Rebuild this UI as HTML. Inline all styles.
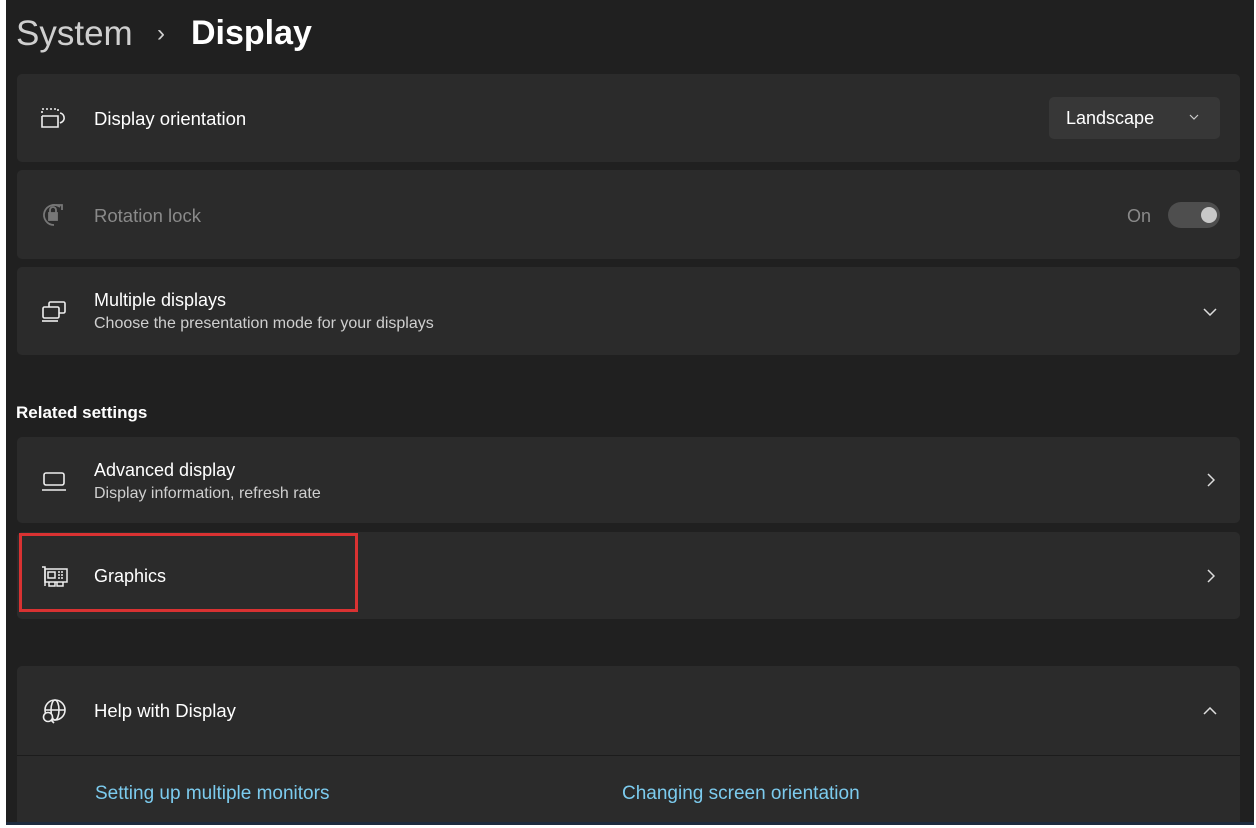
<!DOCTYPE html>
<html><head><meta charset="utf-8"><style>
*{margin:0;padding:0;box-sizing:border-box}
body{width:1256px;height:828px;background:#fff;position:relative;overflow:hidden;font-family:"Liberation Sans",sans-serif}
#app{position:absolute;left:6px;top:0;width:1248px;height:822px;background:#202020}
#bar{position:absolute;left:6px;top:822px;width:1248px;height:3px;background:#1d2b3e}
.t{position:absolute;color:#fff;white-space:nowrap}
.card{position:absolute;left:17px;width:1223px;background:#2b2b2b;border-radius:5px}
.ic{position:absolute;left:40px}
</style></head><body>
<div id="app"></div><div id="bar"></div>
<div class="t" style="left:16px;top:14px;font-size:35px;color:#cfcfcf">System</div>
<div class="t" style="left:157px;top:20px;font-size:24px;color:#cfcfcf">›</div>
<div class="t" style="left:191px;top:14px;font-size:34px;font-weight:bold">Display</div>

<div class="card" style="top:74px;height:88px"></div>
<svg class="ic" style="top:107px" width="28" height="22" viewBox="0 0 28 22" fill="none" stroke="#eee" stroke-width="1.6"><path d="M2 9v11h16V9H2" /><path d="M2 6V2h16v4" stroke-dasharray="2 2"/><path d="M20 6a5 5 0 0 1 2 9l-2 1"/></svg>
<div class="t" style="left:94px;top:108px;font-size:18.5px">Display orientation</div>
<div style="position:absolute;left:1049px;top:97px;width:171px;height:42px;background:#373737;border-radius:5px"></div>
<div class="t" style="left:1066px;top:108px;font-size:18px">Landscape</div>
<svg style="position:absolute;left:1189px;top:114px" width="10" height="6"><path d="M1 1l4 4 4-4" stroke="#ccc" fill="none" stroke-width="1.2"/></svg>

<div class="card" style="top:170px;height:89px"></div>
<svg class="ic" style="top:201px" width="28" height="28" viewBox="0 0 28 28" fill="none" stroke="#777" stroke-width="1.8"><path d="M20 6A10 10 0 1 0 14 24"/><path d="M16 4h6v5"/><rect x="9" y="12" width="8" height="7" fill="#777"/><path d="M10 12v-3a3 3 0 0 1 6 0v3"/></svg>
<div class="t" style="left:94px;top:205px;font-size:18.5px;color:#8a8a8a">Rotation lock</div>
<div class="t" style="left:1127px;top:206px;font-size:18px;color:#8a8a8a">On</div>
<div style="position:absolute;left:1168px;top:202px;width:52px;height:26px;background:#4e4e4e;border-radius:13px"></div>
<div style="position:absolute;left:1201px;top:207px;width:16px;height:16px;background:#c8c8c8;border-radius:50%"></div>

<div class="card" style="top:267px;height:88px"></div>
<svg class="ic" style="top:300px" width="28" height="24" viewBox="0 0 28 24" fill="none" stroke="#eee" stroke-width="1.6"><rect x="9" y="2" width="16" height="11" rx="1.5"/><rect x="3" y="7" width="16" height="11" rx="1.5" fill="#2b2b2b"/><path d="M2 21h16"/></svg>
<div class="t" style="left:94px;top:290px;font-size:18px">Multiple displays</div>
<div class="t" style="left:94px;top:315px;font-size:16px;color:#cfcfcf">Choose the presentation mode for your displays</div>
<svg style="position:absolute;left:1203px;top:308px" width="14" height="8"><path d="M1 1l6 6 6-6" stroke="#ddd" fill="none" stroke-width="1.5"/></svg>

<div class="t" style="left:16px;top:403px;font-size:17px;font-weight:bold">Related settings</div>

<div class="card" style="top:437px;height:86px"></div>
<svg class="ic" style="top:470px" width="28" height="22" viewBox="0 0 28 22" fill="none" stroke="#eee" stroke-width="1.6"><rect x="4" y="3" width="20" height="12" rx="2"/><path d="M2 20h24"/></svg>
<div class="t" style="left:94px;top:460px;font-size:18px">Advanced display</div>
<div class="t" style="left:94px;top:485px;font-size:16px;color:#cfcfcf">Display information, refresh rate</div>
<svg style="position:absolute;left:1207px;top:473px" width="8" height="14"><path d="M1 1l6 6-6 6" stroke="#ddd" fill="none" stroke-width="1.5"/></svg>

<div class="card" style="top:532px;height:87px"></div>
<svg class="ic" style="top:565px" width="28" height="24" viewBox="0 0 28 24" fill="none" stroke="#eee" stroke-width="1.5"><path d="M2 2h3v19"/><rect x="5" y="4" width="22" height="13"/><rect x="8" y="7" width="7" height="6"/><path d="M18 7h6M18 10h6M18 13h6" stroke-dasharray="2 1"/><path d="M9 17v4h6v-4M17 17v4h6v-4"/></svg>
<div class="t" style="left:94px;top:566px;font-size:18px">Graphics</div>
<svg style="position:absolute;left:1207px;top:569px" width="8" height="14"><path d="M1 1l6 6-6 6" stroke="#ddd" fill="none" stroke-width="1.5"/></svg>
<div style="position:absolute;left:19px;top:533px;width:339px;height:79px;border:3px solid #d93232"></div>

<div class="card" style="top:666px;height:156px;border-radius:5px 5px 0 0"></div>
<div style="position:absolute;left:17px;top:755px;width:1223px;height:1px;background:#1c1c1c"></div>
<svg class="ic" style="top:698px" width="28" height="28" viewBox="0 0 28 28" fill="none" stroke="#eee" stroke-width="1.6"><circle cx="15" cy="12" r="10"/><ellipse cx="15" cy="12" rx="4" ry="10"/><path d="M5 12h20"/><circle cx="8" cy="19" r="4.5" fill="#2b2b2b"/><path d="M11 22l3 3"/></svg>
<div class="t" style="left:94px;top:700px;font-size:18.5px">Help with Display</div>
<svg style="position:absolute;left:1203px;top:707px" width="14" height="8"><path d="M1 7l6-6 6 6" stroke="#ddd" fill="none" stroke-width="1.5"/></svg>
<div class="t" style="left:95px;top:783px;font-size:19px;color:#7ccbee">Setting up multiple monitors</div>
<div class="t" style="left:622px;top:783px;font-size:19px;color:#7ccbee">Changing screen orientation</div>
</body></html>
